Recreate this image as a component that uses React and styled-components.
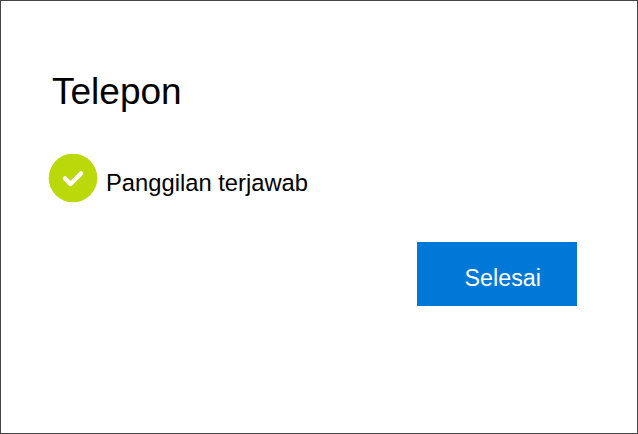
import React from "react";
import styled, { createGlobalStyle } from "styled-components";

const GlobalStyle = createGlobalStyle`
  html, body {
    margin: 0;
    padding: 0;
    background: #fff;
  }
`;

const Frame = styled.div`
  box-sizing: border-box;
  width: 638px;
  height: 434px;
  border: 1px solid #444;
  background: #fff;
  color: #000;
  font-family: "Liberation Sans", Arial, sans-serif;
  padding: 70px 60px 0 47px;
  display: flex;
  flex-direction: column;
`;

const Title = styled.h1`
  margin: 0 0 0 4px;
  font-size: 37px;
  font-weight: 400;
  line-height: 42px;
`;

const StatusRow = styled.div`
  display: flex;
  align-items: center;
  gap: 9px;
  margin-top: 41px;
`;

const StatusIcon = styled.svg`
  width: 50px;
  height: 49px;
  flex: none;
`;

const StatusText = styled.span`
  font-size: 23.75px;
  line-height: 28px;
  margin-left: -1px;
  padding-top: 9px;
`;

const Actions = styled.div`
  display: flex;
  justify-content: flex-end;
  margin-top: 39px;
`;

const DoneButton = styled.button`
  box-sizing: border-box;
  width: 160px;
  height: 64px;
  border: 0;
  border-radius: 0;
  padding: 8px 0 0 47.5px;
  background: #0078d7;
  color: #fff;
  font-family: inherit;
  font-size: 23.3px;
  text-align: left;
`;

export default function App() {
  return (
    <>
      <GlobalStyle />
      <Frame>
        <Title>Telepon</Title>
        <StatusRow>
          <StatusIcon viewBox="0 0 50 49">
            <circle cx="25" cy="24" r="24.3" fill="#bad80a" />
            <path
              d="M17 24.5l5.5 5.5 10.5-10.5"
              fill="none"
              stroke="#fff"
              strokeWidth="4.5"
              strokeLinecap="round"
              strokeLinejoin="round"
            />
          </StatusIcon>
          <StatusText>Panggilan terjawab</StatusText>
        </StatusRow>
        <Actions>
          <DoneButton>Selesai</DoneButton>
        </Actions>
      </Frame>
    </>
  );
}
